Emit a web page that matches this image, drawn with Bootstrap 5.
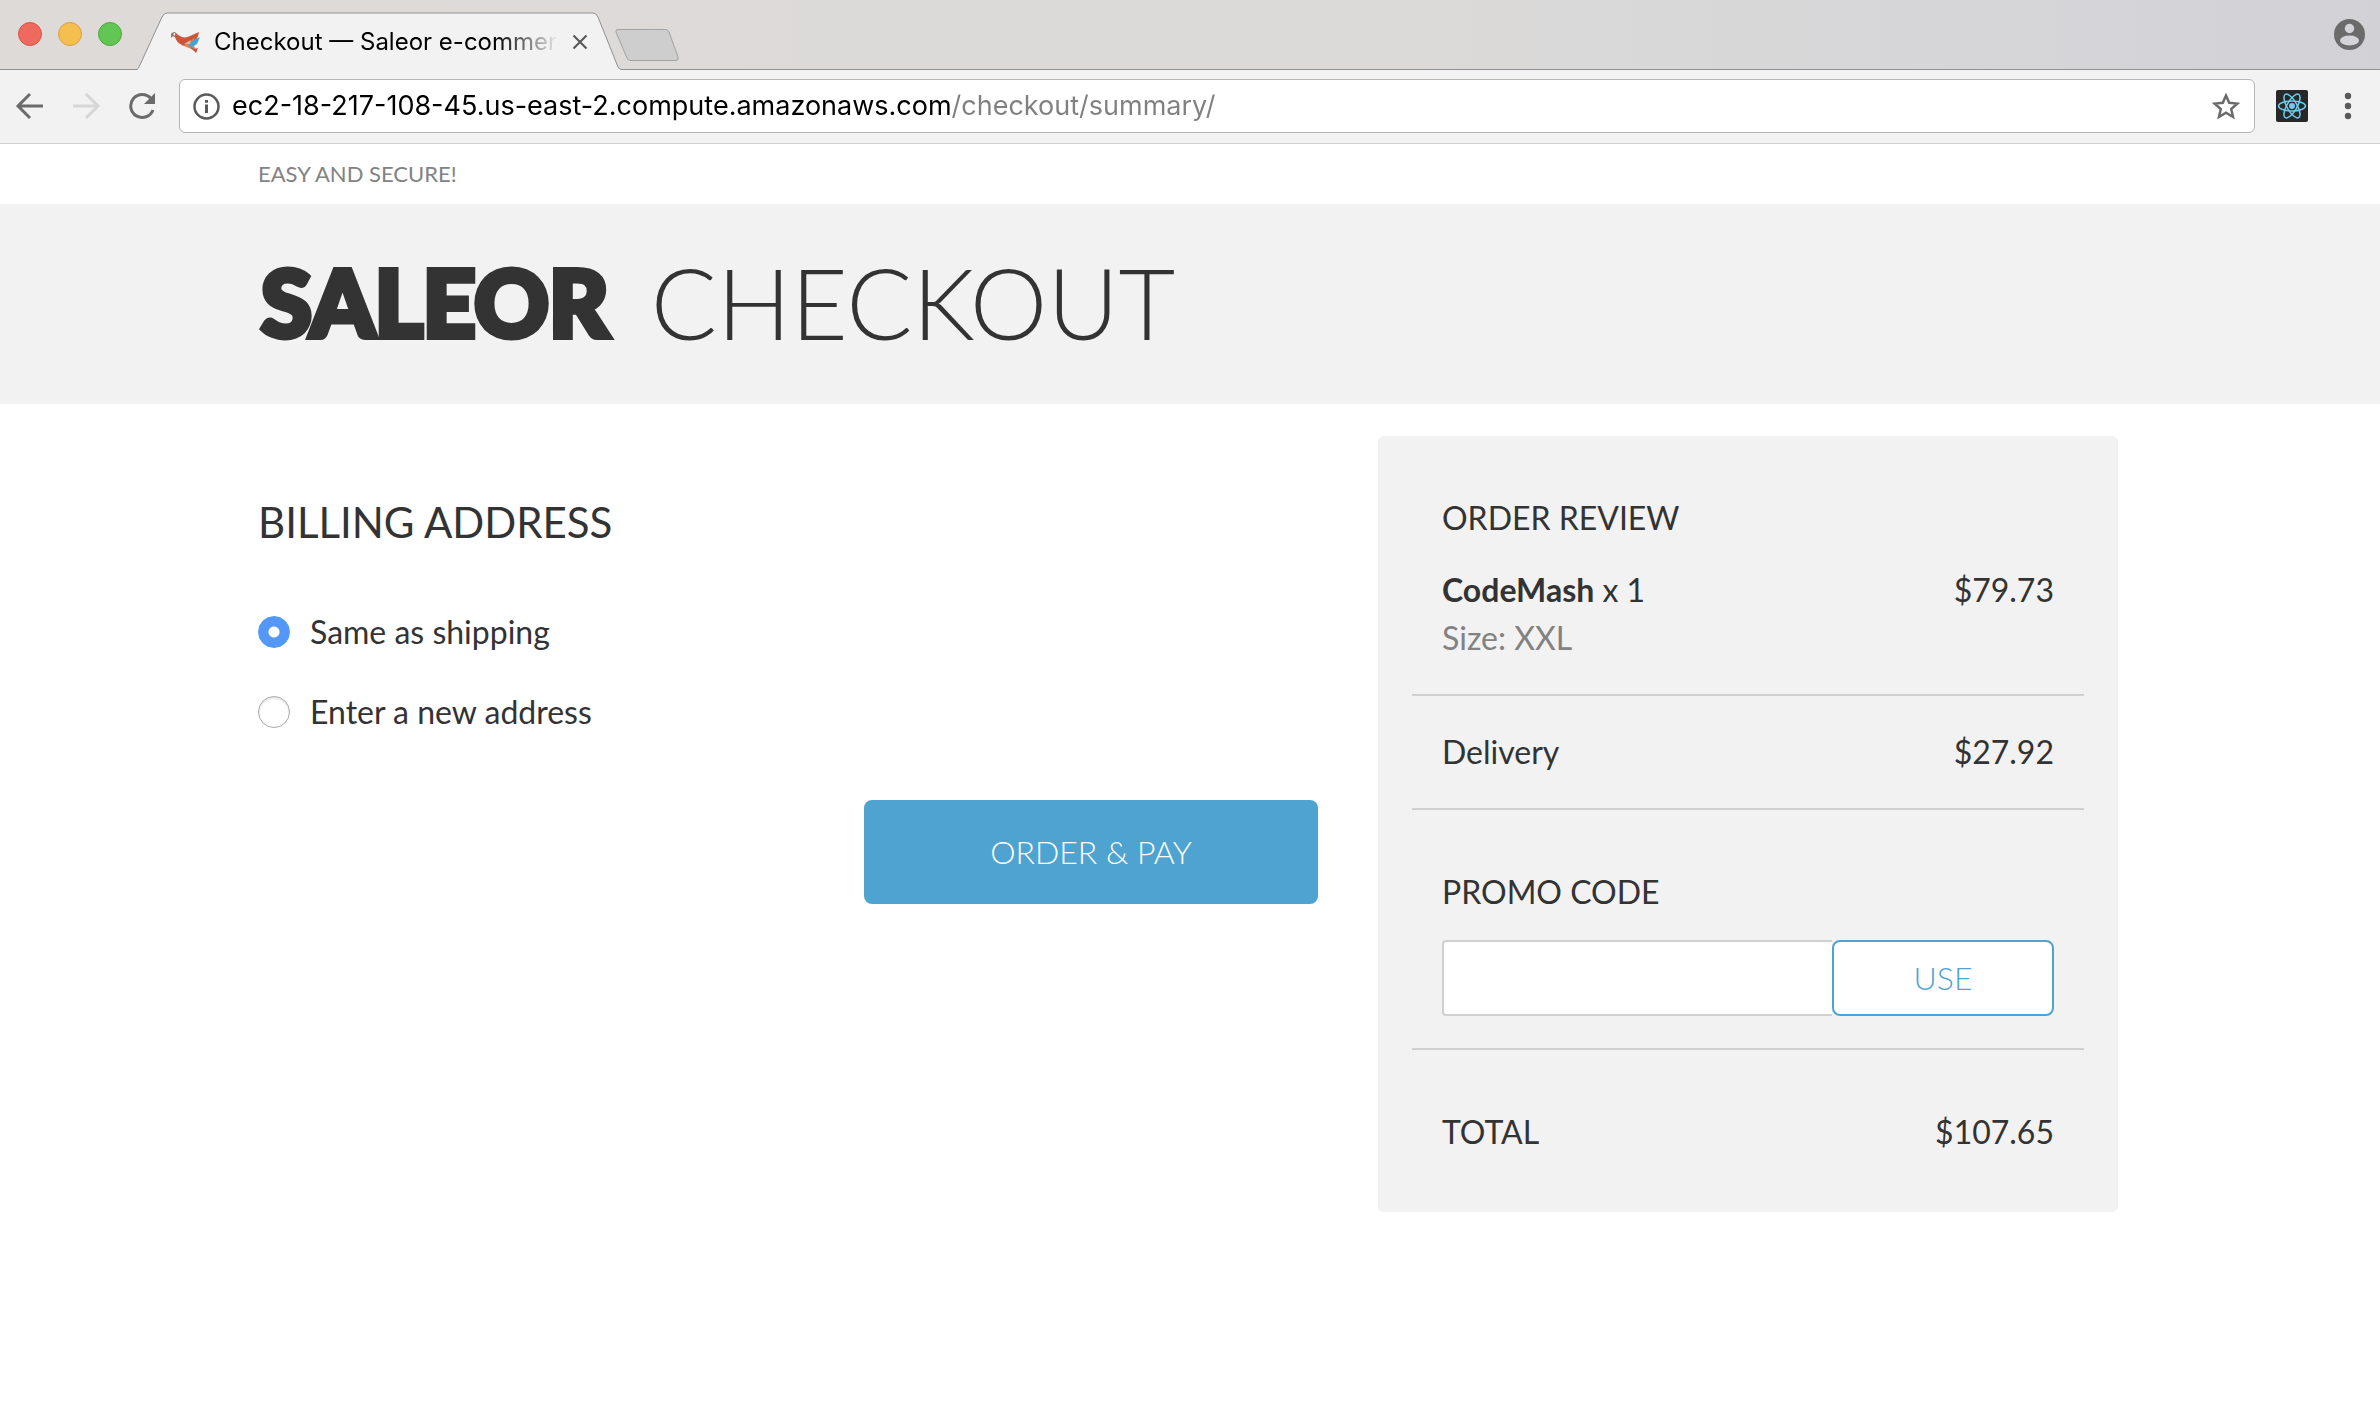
<!DOCTYPE html>
<html lang="en">
<head>
<meta charset="utf-8">
<meta name="viewport" content="width=device-width, initial-scale=1">
<title>Checkout — Saleor e-commerce</title>
<link href="https://cdn.jsdelivr.net/npm/bootstrap@5.3.0/dist/css/bootstrap.min.css" rel="stylesheet">
<style>
  :root { --ink: #333; --panel: #f2f2f2; --accent: #4fa3d1; --rule: #d0d0d0; }
  body { font-family: Lato, sans-serif; font-size: 32px; line-height: 48px; color: var(--ink); background: #fff; }
  svg { display: block; flex: none; }
  .plain-btn { background: none; border: 0; padding: 0; line-height: 0; }

  /* browser window */
  .chrome-ui { font-family: Inter, "Liberation Sans", sans-serif; }
  .tab-strip { height: 70px; background: linear-gradient(90deg, #dedad8, #dbdad9 60%, #d2d1d6); box-shadow: inset 0 -1px #909094; padding: 0 15px 0 18px; }
  .lights { gap: 16px; padding-top: 22px; }
  .light { width: 24px; height: 24px; border-radius: 50%; border: 1px solid; }
  .light-red { background: #ee6a5f; border-color: #d5554b; }
  .light-amber { background: #f5bf4f; border-color: #d9a13d; }
  .light-green { background: #62c655; border-color: #4da83f; }
  .tab { width: 486px; height: 58px; margin: 12px 0 0 14px; padding: 1px 34px 0; gap: 13px; z-index: 1; }
  .tab-shape { position: absolute; inset: 0; z-index: -1; }
  .tab-title { font-size: 24px; line-height: 30px; color: #000; width: 352px; min-width: 0; white-space: nowrap; padding-left: 1px; -webkit-mask-image: linear-gradient(90deg, #000 82%, transparent); mask-image: linear-gradient(90deg, #000 82%, transparent); }
  .tab-plus { margin: 28px 0 0 -8px; }
  .account { padding-top: 19px; }
  .toolbar { height: 74px; background: #f2f2f2; border-bottom: 1px solid #cfcfcf; padding: 9px 26px 10px 15px; }
  .omnibox { height: 54px; background: #fff; border: 1px solid #b5b5b5; border-radius: 6px; padding: 0 13px; gap: 12px; margin-right: 21px; }
  .url { font-size: 27px; line-height: 34px; border: 0; outline: 0; padding: 0; color: transparent; caret-color: #000; background: linear-gradient(90deg, #000 719px, #808080 719px); -webkit-background-clip: text; background-clip: text; }

  /* shop pages */
  .shell { max-width: 1920px; padding: 0 30px; }
  .top-note { height: 60px; font-size: 22px; line-height: 32px; color: #828282; }
  .brand-bar { height: 200px; background: var(--panel); padding-bottom: 4px; }
  .brand-bar h1 { gap: 42px; line-height: 120px; padding-left: 3px; }
  .wordmark { font-size: 92px; font-weight: 900; color: var(--ink); text-decoration: none; -webkit-text-stroke: 6px var(--ink); }
  .step-name { font-size: 98px; font-weight: 300; }
  .billing { padding-top: 88px; }
  .billing h2 { font-size: 42px; line-height: 60px; margin-bottom: 56px; font-weight: 400; }
  .choices { gap: 32px; margin-bottom: 64px; }
  .choice { gap: 20px; }
  .choice input { appearance: none; width: 32px; height: 32px; margin: 0; border-radius: 50%; border: 1px solid #a9a9a9; background: #fff; box-shadow: inset 0 2px 2px #e6e6e6; }
  .choice input:checked { border-color: #5398f6; box-shadow: none; background: radial-gradient(circle, #fff 5px, #5398f6 6px); }
  .cta { width: 454px; height: 104px; font-size: 32px; font-weight: 300; border-radius: 8px; color: #fff; background: var(--accent); border: 0; }
  .summary { margin-top: 32px; padding: 58px 34px 56px; background: var(--panel); border-radius: 6px; }
  .summary h3 { font-size: 32px; line-height: 48px; font-weight: 400; margin: 0 0 24px; }
  .inset { padding: 0 30px; }
  .summary hr { margin: 32px 0; border-top: 2px solid var(--rule); opacity: 1; }
  .summary hr.wide-after { margin-bottom: 58px; }
  .muted { color: #828282; }
  .promo { height: 76px; }
  .promo input { height: 76px; border: 2px solid var(--rule); border-right: 0; border-radius: 4px 0 0 4px; font-size: 32px; }
  .promo button { width: 222px; font-size: 32px; font-weight: 300; color: var(--accent); background: #fff; border: 2px solid var(--accent); border-radius: 8px; }
</style>
</head>
<body>
<div class="chrome-ui">
  <div class="tab-strip d-flex align-items-start">
    <div class="lights d-flex">
      <span class="light light-red"></span><span class="light light-amber"></span><span class="light light-green"></span>
    </div>
    <div class="tab position-relative d-flex align-items-center">
      <svg class="tab-shape" width="486" height="58" viewBox="0 0 486 58"><path d="M0 57.5H1Q2 57 3 55L26 5Q28 1 31 1H457Q460 1 462 5L482 55Q483 57 486 57.5V58H0Z" fill="#f2f2f2"/><path d="M0 57.5H1Q2 57 3 55L26 5Q28 1 31 1H457Q460 1 462 5L482 55Q483 57.5 486 57.5" fill="none" stroke="#909094"/></svg>
      <svg width="30" height="22" viewBox="0 0 30 22"><path d="M1 3Q3 0 6 2Q13 9 20 5L29 1Q28 9 20 15L12 14Q6 11 5 6L2 5Z" fill="#cb5538"/><path d="M1 3L5 1L6 4L3 5L1 7Z" fill="#8d7b74"/><path d="M3 3L5 2L5 5Z" fill="#fff"/><path d="M11 14Q18 14 22 9L25 6L23 13L27 21L19 17Z" fill="#d98261"/><path d="M22 10L30 6L27 13L22 16L18 14Z" fill="#45a3cf"/><path d="M14 13L21 9L20 13Z" fill="#e6b98c"/><path d="M19 15L24 18L28 17L26 22Z" fill="#b85a46"/></svg>
      <div class="tab-title">Checkout — Saleor e-commerc</div>
      <button class="plain-btn" aria-label="Close tab"><svg width="16" height="16" viewBox="0 0 16 16"><path d="M1.500 1.500L14.500 14.500M14.500 1.500L1.500 14.500" stroke="#555" stroke-width="2"/></svg></button>
    </div>
    <button class="plain-btn tab-plus" aria-label="New tab"><svg width="66" height="34" viewBox="0 0 66 34"><path d="M4 1.500H51Q54 1.500 55 4L64 29Q65 32.500 62 32.500H17Q14 32.500 13 30L2 4Q1 1.500 4 1.500Z" fill="#cecece" stroke="#a2a2a2"/></svg></button>
    <button class="plain-btn account ms-auto" aria-label="Account"><svg width="31" height="31" viewBox="0 0 31 31"><circle cx="15.500" cy="15.500" r="15.500" fill="#6b6b6b"/><circle cx="15.500" cy="9.500" r="4.700" fill="#d4d3d7"/><ellipse cx="15.500" cy="21.500" rx="9.500" ry="5" fill="#d4d3d7"/></svg></button>
  </div>
  <div class="toolbar d-flex align-items-center">
    <button class="plain-btn" aria-label="Back"><svg width="30" height="28" viewBox="0 0 30 28"><path d="M28 14H4M15 2L3 14L15 26" fill="none" stroke="#6b6b6b" stroke-width="3"/></svg></button>
    <button class="plain-btn ms-4" aria-label="Forward"><svg width="34" height="28" viewBox="0 0 34 28"><path d="M4 14H28M17 2L29 14L17 26" fill="none" stroke="#d6d6d6" stroke-width="3"/></svg></button>
    <button class="plain-btn ms-4 me-4" aria-label="Reload"><svg width="28" height="28" viewBox="0 0 28 28"><path d="M24 6.500A11.500 11.500 0 1 0 26 18" fill="none" stroke="#6b6b6b" stroke-width="3"/><path d="M28 1V12H17Z" fill="#6b6b6b"/></svg></button>
    <div class="omnibox d-flex align-items-center flex-grow-1">
      <svg width="27" height="27" viewBox="0 0 27 27"><circle cx="13.500" cy="13.500" r="12" fill="none" stroke="#5a5a5a" stroke-width="2.500"/><path d="M13.500 11.500V20M13.500 7V9.800" stroke="#5a5a5a" stroke-width="3"/></svg>
      <input class="url flex-grow-1" aria-label="Address" value="ec2-18-217-108-45.us-east-2.compute.amazonaws.com/checkout/summary/">
      <button class="plain-btn" aria-label="Bookmark"><svg width="30" height="28" viewBox="0 0 30 28"><path d="M15 3.500L18.200 10.800L26.300 11.600L20.200 17L22 25L15 20.800L8 25L9.800 17L3.700 11.600L11.800 10.800Z" fill="none" stroke="#6b6b6b" stroke-width="2.500"/></svg></button>
    </div>
    <svg width="32" height="32" viewBox="0 0 32 32"><rect width="32" height="32" rx="2" fill="#282828"/><g fill="none" stroke="#6fcdf0" stroke-width="1.500" transform="translate(16 16)"><ellipse rx="13.500" ry="5"/><ellipse rx="13.500" ry="5" transform="rotate(60)"/><ellipse rx="13.500" ry="5" transform="rotate(120)"/><circle r="2.200" fill="#6fcdf0"/></g></svg>
    <button class="plain-btn" aria-label="Menu"><svg width="46" height="28" viewBox="0 0 46 28"><g fill="#5a5a5a"><circle cx="40" cy="4" r="3.200"/><circle cx="40" cy="14" r="3.200"/><circle cx="40" cy="24" r="3.200"/></g></svg></button>
  </div>
</div>

<header>
  <div class="pe-1">
    <div class="shell mx-auto top-note d-flex align-items-center">EASY AND SECURE!</div>
  </div>
  <div class="brand-bar pe-1">
    <div class="shell mx-auto h-100 d-flex align-items-center">
      <h1 class="d-flex align-items-center m-0"><a class="wordmark" href="#">SALEOR</a><span class="step-name">CHECKOUT</span></h1>
    </div>
  </div>
</header>

<main class="pe-1">
  <div class="shell mx-auto">
    <div class="row" style="--bs-gutter-x:60px">
      <form class="col-7 billing">
        <h2>BILLING ADDRESS</h2>
        <div class="choices d-flex flex-column">
          <div class="choice d-flex align-items-center"><input type="radio" name="addr" id="same" checked><label for="same">Same as shipping</label></div>
          <div class="choice d-flex align-items-center"><input type="radio" name="addr" id="fresh"><label for="fresh">Enter a new address</label></div>
        </div>
        <div class="d-flex justify-content-end"><button class="btn cta" type="button">ORDER &amp; PAY</button></div>
      </form>
      <aside class="col-5">
        <div class="summary">
          <div class="inset">
            <h3>ORDER REVIEW</h3>
            <div class="d-flex justify-content-between">
              <div><div><strong>CodeMash</strong> x 1</div><div class="muted">Size: XXL</div></div>
              <div>$79.73</div>
            </div>
          </div>
          <hr>
          <div class="inset d-flex justify-content-between"><span>Delivery</span><span>$27.92</span></div>
          <hr class="wide-after">
          <form class="inset">
            <h3><label for="promo">PROMO CODE</label></h3>
            <div class="promo d-flex">
              <input class="form-control rounded-end-0" id="promo" type="text">
              <button class="btn flex-shrink-0" type="button">USE</button>
            </div>
          </form>
          <hr class="wide-after">
          <div class="inset d-flex justify-content-between"><span>TOTAL</span><span>$107.65</span></div>
        </div>
      </aside>
    </div>
  </div>
</main>
<script src="https://cdn.jsdelivr.net/npm/bootstrap@5.3.0/dist/js/bootstrap.bundle.min.js"></script>
</body>
</html>
